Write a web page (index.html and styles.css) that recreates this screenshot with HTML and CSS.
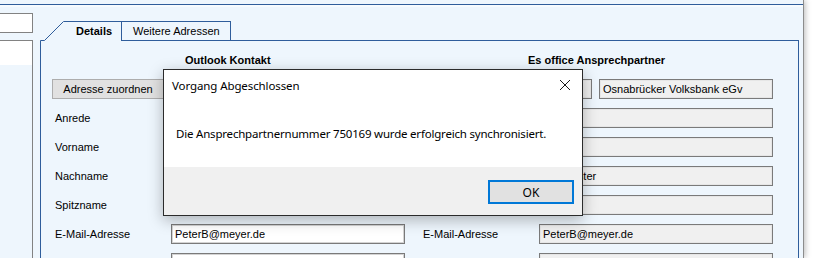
FILE: index.html
```html
<html>

<head>
	<title>Kontakt synchronisieren</title>
	<link rel="stylesheet" href="styles.css">
</head>
<body>
	<div class="screen">
		<div class="window">
			<div class="topline"></div>
			<div class="main">
				<div class="sidebar">
					<div class="search"></div>
					<div class="list">
						<div class="list-item"></div>
					</div>
				</div>

				<div class="tabs">
					<div class="tabstrip">
						<div class="tab tab-active">
							<svg class="bevel" width="81" height="20" viewBox="0 0 81 20">
								<path d="M0.5 20 V19.5 H4.5 L23.5 0.5 H81" fill="none" stroke="#2f5d9b" stroke-width="1"/>
							</svg>
							<span>Details</span>
						</div>
						<div class="tab">Weitere Adressen</div>
					</div>

					<div class="tabpanel">
						<div class="form">
							<div></div>
							<div class="heading heading-left">Outlook Kontakt</div>
							<div class="heading heading-right">Es office Ansprechpartner</div>

							<div><button class="btn">Adresse zuordnen</button></div>
							<div class="field"></div>
							<div></div>
							<div class="pair">
								<div class="field field-ro field-small">750169</div>
								<div class="field field-ro field-big">Osnabrücker Volksbank eGv</div>
							</div>

							<div class="label">Anrede</div>
							<div class="field">Herr</div>
							<div class="label label-right">Anrede</div>
							<div class="field field-ro">Herr</div>

							<div class="label">Vorname</div>
							<div class="field">Peter</div>
							<div class="label label-right">Vorname</div>
							<div class="field field-ro">Peter</div>

							<div class="label">Nachname</div>
							<div class="field">Hofmeister</div>
							<div class="label label-right">Nachname</div>
							<div class="field field-ro">Hofmeister</div>

							<div class="label">Spitzname</div>
							<div class="field"></div>
							<div class="label label-right">Spitzname</div>
							<div class="field field-ro"></div>

							<div class="label">E-Mail-Adresse</div>
							<div class="field">PeterB@meyer.de</div>
							<div class="label label-right">E-Mail-Adresse</div>
							<div class="field field-ro">PeterB@meyer.de</div>

							<div class="label"></div>
							<div class="field"></div>
							<div class="label label-right"></div>
							<div class="field field-ro"></div>
						</div>
					</div>
				</div>
			</div>
		</div>

		<!-- message box over the form -->
		<div class="dialog">
			<div class="dialog-title">
				<span>Vorgang Abgeschlossen</span>
				<svg class="close" width="10" height="10" viewBox="0 0 10 10">
					<path d="M0 0 L10 10 M10 0 L0 10" stroke="#1a1a1a" stroke-width="1"/>
				</svg>
			</div>
			<div class="dialog-body">Die Ansprechpartnernummer 750169 wurde erfolgreich synchronisiert.</div>
			<div class="dialog-footer">
				<button class="btn-ok">OK</button>
			</div>
		</div>
	</div>
</body>
</html>
```

FILE: styles.css
```css
body{
	margin: 0;
	background-color: #fff;
	font-family: "Liberation Sans", Arial, sans-serif;
	font-size: 11px;
	color: #000;
}

.screen{
	position: relative;
	width: 825px;
	height: 258px;
	overflow: hidden;
}

.window{
	width: 803px;
	height: 258px;
	background-color: #eef6fd;
	border-right: 1px solid #8c8c8c;
	box-shadow: 1px 0 6px rgba(0, 0, 0, 0.28);
	overflow: hidden;
}

.topline{
	height: 4px;
	border-bottom: 1px solid #2f5d9b;
	box-shadow: 0 2px 0 #f7fbfe;
}

.main{
	display: flex;
	height: 253px;
}

/* left column */
.sidebar{
	width: 33px;
	flex: none;
}

.search{
	margin: 8px 0 0 -2px;
	height: 20px;
	box-sizing: border-box;
	border: 1px solid #828282;
	background-color: #fff;
}

.list{
	margin: 7px 0 0 -2px;
	height: 230px;
	box-sizing: border-box;
	border: 1px solid #828282;
	background-color: #eef6fd;
}

.list-item{
	height: 24px;
	background-color: #fff;
}

/* tab control */
.tabs{
	margin-left: 7px;
	padding-top: 16px;
	width: 759px;
	flex: none;
}

.tabstrip{
	display: flex;
	height: 19px;
	position: relative;
	z-index: 1;
}

.tab{
	width: 110px;
	height: 19px;
	box-sizing: border-box;
	border: 1px solid #2f5d9b;
	border-bottom: none;
	padding-left: 11px;
	line-height: 18px;
	background-color: #eef6fd;
	white-space: nowrap;
}

.tab-active{
	position: relative;
	width: 81px;
	height: 20px;
	border: none;
	padding-left: 36px;
	line-height: 20px;
	font-weight: bold;
}

.bevel{
	position: absolute;
	left: 0;
	top: 0;
}

.tab-active span{
	position: relative;
}

.tabpanel{
	height: 240px;
	border: 1px solid #2f5d9b;
	background-color: #eef6fd;
	padding: 9px 0 0 14px;
}

.form{
	display: grid;
	grid-template-columns: 116px 234px 134px 234px;
	grid-auto-rows: 20px;
	row-gap: 9px;
	align-items: center;
}

.heading{
	font-weight: bold;
	white-space: nowrap;
}

.heading-left{
	padding-left: 14px;
}

.heading-right{
	grid-column: 3 / 5;
	padding-left: 123px;
}

.label{
	white-space: nowrap;
}

.label-right{
	padding-left: 18px;
}

.btn{
	margin-left: -3px;
	width: 112px;
	height: 20px;
	border: 1px solid #adadad;
	background-color: #e1e1e1;
	font-family: "Liberation Sans", Arial, sans-serif;
	font-size: 11px;
	color: #000;
	padding: 0;
}

.field{
	height: 20px;
	box-sizing: border-box;
	border: 1px solid #7a7a7a;
	box-shadow: inset 0 0 0 1px #d4d4d4;
	background-color: #fff;
	padding-left: 3px;
	line-height: 18px;
	white-space: nowrap;
	overflow: hidden;
}

.field-ro{
	background-color: #f0f0f0;
	box-shadow: inset 0 0 0 1px #e6e6e6;
}

.pair{
	display: flex;
	gap: 7px;
}

.field-small{
	width: 53px;
	flex: none;
}

.field-big{
	width: 174px;
	flex: none;
}

/* message box */
.dialog{
	position: absolute;
	left: 163px;
	top: 69px;
	width: 420px;
	height: 147px;
	box-sizing: border-box;
	border: 1px solid #2b2b2b;
	background-color: #fff;
	box-shadow: 0 4px 14px rgba(0, 0, 0, 0.28);
	font-family: "Noto Sans", "Open Sans", sans-serif;
	font-size: 11.5px;
	display: flex;
	flex-direction: column;
}

.dialog-title{
	height: 30px;
	display: flex;
	align-items: center;
	justify-content: space-between;
	padding: 0 12px 0 8px;
	letter-spacing: -0.1px;
}

.close{
	margin-top: -1px;
}

.dialog-body{
	height: 67px;
	line-height: 67px;
	padding-left: 12px;
	letter-spacing: -0.2px;
	white-space: nowrap;
}

.dialog-footer{
	flex: 1;
	background-color: #f0f0f0;
	display: flex;
	justify-content: flex-end;
	align-items: flex-start;
	padding: 13px 8px 0 0;
}

.btn-ok{
	width: 86px;
	height: 24px;
	border: 2px solid #0078d7;
	background-color: #e1e1e1;
	font-family: "Noto Sans", "Open Sans", sans-serif;
	font-size: 12px;
	color: #000;
	padding: 0;
}
```
